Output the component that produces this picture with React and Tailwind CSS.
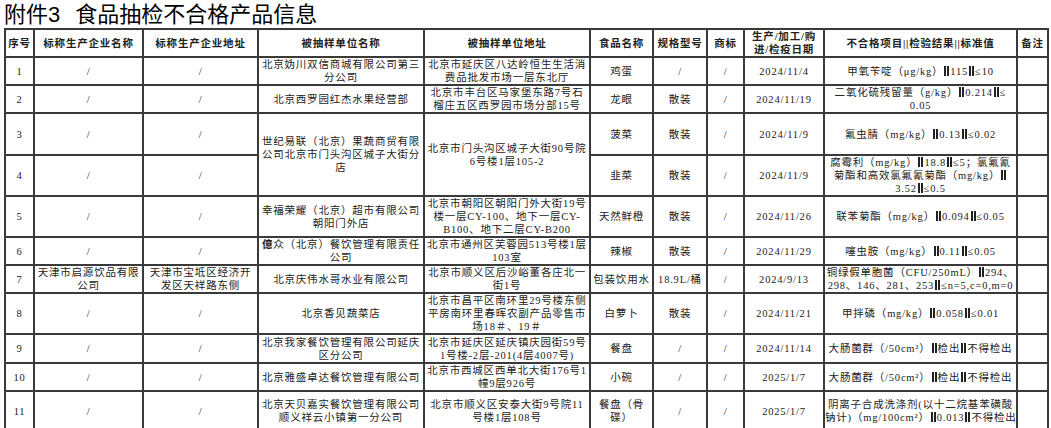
import React from 'react';

const COLS = [29, 109, 115, 166, 166, 63, 54, 37, 80, 193, 31];

const HEAD = [
  ['序号'],
  ['标称生产企业名称'],
  ['标称生产企业地址'],
  ['被抽样单位名称'],
  ['被抽样单位地址'],
  ['食品名称'],
  ['规格型号'],
  ['商标'],
  ['生产/加工/购', '进/检疫日期'],
  ['不合格项目||检验结果||标准值'],
  ['备注'],
];

const ROWS = [
  {
    h: 'h-[28px]',
    cells: [
      ['1'], ['/'], ['/'],
      ['北京妫川双信商城有限公司第三', '分公司'],
      ['北京市延庆区八达岭恒生生活消', '费品批发市场一层东北厅'],
      ['鸡蛋'], ['/'], ['/'], ['2024/11/4'],
      ['甲氧苄啶（μg/kg）‖115‖≤10'], [''],
    ],
  },
  {
    h: 'h-[27px]',
    cells: [
      ['2'], ['/'], ['/'],
      ['北京西罗园红杰水果经营部'],
      ['北京市丰台区马家堡东路7号石', '榴庄五区西罗园市场分部15号'],
      ['龙眼'], ['散装'], ['/'], ['2024/11/19'],
      ['二氧化硫残留量（g/kg）‖0.214‖≤', '0.05'], [''],
    ],
  },
  {
    h: 'h-[42px]',
    cells: [
      ['3'], ['/'], ['/'],
      { lines: ['世纪易联（北京）果蔬商贸有限', '公司北京市门头沟区城子大街分', '店'], span: 2 },
      { lines: ['北京市门头沟区城子大街90号院', '6号楼1层105-2'], span: 2 },
      ['菠菜'], ['散装'], ['/'], ['2024/11/9'],
      ['氟虫腈（mg/kg）‖0.13‖≤0.02'], [''],
    ],
  },
  {
    h: 'h-[40px]',
    cells: [
      ['4'], ['/'], ['/'],
      ['韭菜'], ['散装'], ['/'], ['2024/11/9'],
      ['腐霉利（mg/kg）‖18.8‖≤5；氯氟氰', '菊酯和高效氯氟氰菊酯（mg/kg）‖', '3.52‖≤0.5'], [''],
    ],
  },
  {
    h: 'h-[40px]',
    cells: [
      ['5'], ['/'], ['/'],
      ['幸福荣耀（北京）超市有限公司', '朝阳门外店'],
      ['北京市朝阳区朝阳门外大街19号', '楼一层CY-100、地下一层CY-', 'B100、地下二层CY-B200'],
      ['天然鲜橙'], ['散装'], ['/'], ['2024/11/26'],
      ['联苯菊酯（mg/kg）‖0.094‖≤0.05'], [''],
    ],
  },
  {
    h: 'h-[28px]',
    cells: [
      ['6'], ['/'], ['/'],
      [<><span className="font-bold">億</span>众（北京）餐饮管理有限责任</>, '公司'],
      ['北京市通州区芙蓉园513号楼1层', '103室'],
      ['辣椒'], ['散装'], ['/'], ['2024/11/29'],
      ['噻虫胺（mg/kg）‖0.11‖≤0.05'], [''],
    ],
  },
  {
    h: 'h-[28px]',
    cells: [
      ['7'],
      ['天津市启源饮品有限', '公司'],
      ['天津市宝坻区经济开', '发区天祥路东侧'],
      ['北京庆伟水哥水业有限公司'],
      ['北京市顺义区后沙峪董各庄北一', '街1号'],
      ['包装饮用水'], ['18.9L/桶'], ['/'], ['2024/9/13'],
      ['铜绿假单胞菌（CFU/250mL）‖294、', '298、146、281、253‖≤n=5,c=0,m=0'], [''],
    ],
  },
  {
    h: 'h-[40px]',
    cells: [
      ['8'], ['/'], ['/'],
      ['北京香见蔬菜店'],
      ['北京市昌平区南环里29号楼东侧', '平房南环里春晖农副产品零售市', '场18＃、19＃'],
      ['白萝卜'], ['散装'], ['/'], ['2024/11/21'],
      ['甲拌磷（mg/kg）‖0.058‖≤0.01'], [''],
    ],
  },
  {
    h: 'h-[29px]',
    cells: [
      ['9'], ['/'], ['/'],
      ['北京我家餐饮管理有限公司延庆', '区分公司'],
      ['北京市延庆区延庆镇庆园街59号', '1号楼-2层-201(4层4007号)'],
      ['餐盘'], ['/'], ['/'], ['2024/11/14'],
      ['大肠菌群（/50cm²）‖检出‖不得检出'], [''],
    ],
  },
  {
    h: 'h-[26px]',
    cells: [
      ['10'], ['/'], ['/'],
      ['北京雅盛卓达餐饮管理有限公司'],
      ['北京市西城区西单北大街176号1', '幢9层926号'],
      ['小碗'], ['/'], ['/'], ['2025/1/7'],
      ['大肠菌群（/50cm²）‖检出‖不得检出'], [''],
    ],
  },
  {
    h: 'h-[40px]',
    cells: [
      ['11'], ['/'], ['/'],
      ['北京天贝嘉实餐饮管理有限公司', '顺义祥云小镇第一分公司'],
      ['北京市顺义区安泰大街9号院11', '号楼1层108号'],
      ['餐盘（骨', '碟）'], ['/'], ['/'], ['2025/1/7'],
      ['阴离子合成洗涤剂(以十二烷基苯磺酸', '钠计)（mg/100cm²）‖0.013‖不得检出'], [''],
    ],
  },
];

// the double bar reads as a heavy mark in the source document, drawn as two short rules
const withBars = (l) => {
  if (typeof l !== 'string' || !l.includes('‖')) return l;
  const parts = l.split('‖');
  return parts.map((p, i) => (
    <React.Fragment key={i}>
      {p}
      {i < parts.length - 1 && (
        <span
          aria-label="‖"
          className="inline-block w-[5px] h-[10px] border-x-2 border-[#222] align-[-1px] mx-[1px]"
        />
      )}
    </React.Fragment>
  ));
};

const Cell = ({ cell, head }) => {
  const lines = Array.isArray(cell) ? cell : cell.lines;
  const span = Array.isArray(cell) ? 1 : cell.span;
  return (
    <td
      rowSpan={span}
      className={`border-2 border-[#3a3a3a] p-0 text-center align-middle leading-[13px] ${head ? 'font-bold' : ''}`}
    >
      {lines.map((l, i) => (
        <div key={i} className="whitespace-nowrap">
          {withBars(l)}
        </div>
      ))}
    </td>
  );
};

export default function App() {
  return (
    <div className="bg-white w-[1051px] h-[428px] overflow-hidden pl-1 text-[#222]">
      <div className="h-[28px] leading-[30px] text-[22px] font-['Liberation_Sans','Noto_Sans_CJK_SC',sans-serif] text-black">
        <span>附件3</span>
        <span className="ml-[15px]">食品抽检不合格产品信息</span>
      </div>
      <table className="table-fixed border-collapse w-[1043px] text-[10.5px] tracking-[0.8px] font-['Liberation_Serif','Noto_Sans_CJK_SC',serif]">
        <colgroup>
          {COLS.map((w, i) => (
            <col key={i} style={{ width: w }} />
          ))}
        </colgroup>
        <tbody>
          <tr className="h-[27px]">
            {HEAD.map((c, i) => (
              <Cell key={i} cell={c} head />
            ))}
          </tr>
          {ROWS.map((r, i) => (
            <tr key={i} className={r.h}>
              {r.cells.map((c, j) => (
                <Cell key={j} cell={c} />
              ))}
            </tr>
          ))}
        </tbody>
      </table>
    </div>
  );
}
